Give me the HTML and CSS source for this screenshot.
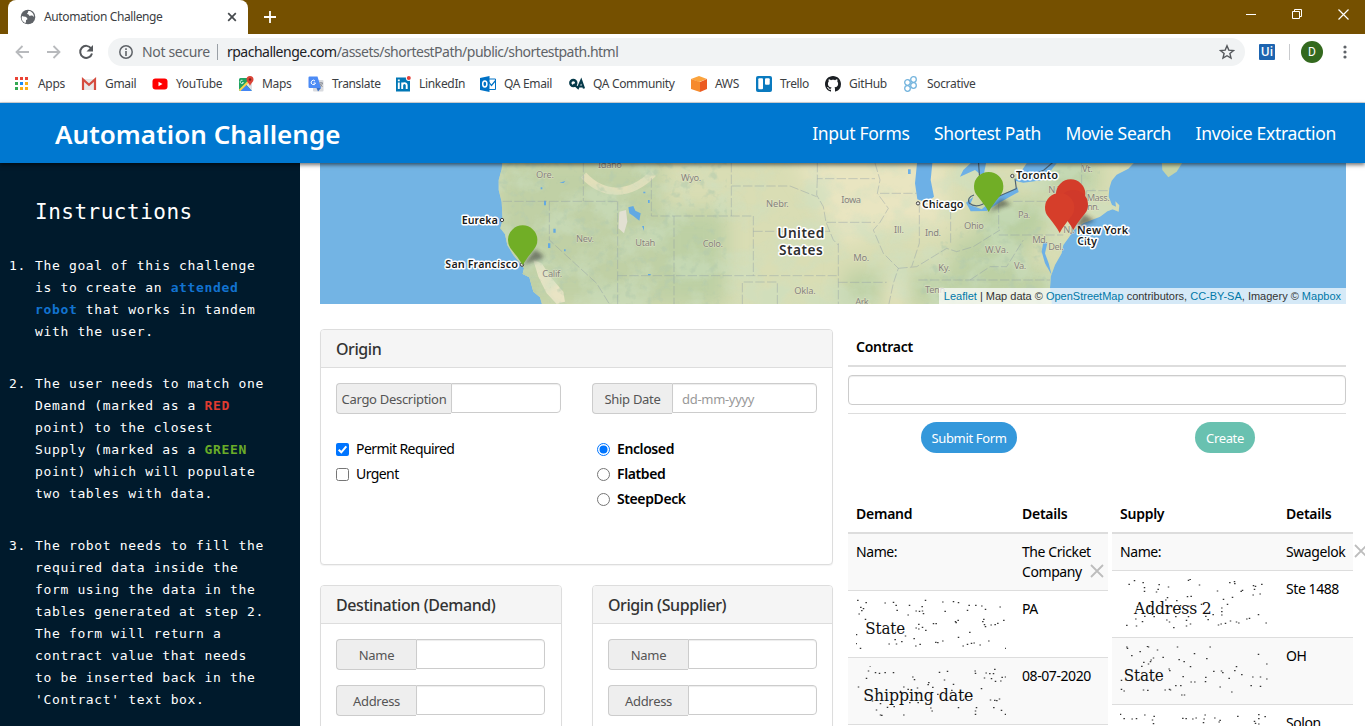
FILE: index.html
```html
<!DOCTYPE html>
<html lang="en">
<head>
<meta charset="utf-8">
<title>Automation Challenge</title>
<link rel="stylesheet" href="styles.css">
</head>
<body>
<div class="tabstrip">
  <div class="tab">
    <svg width="16" height="16" viewBox="0 0 16 16"><circle cx="8" cy="8" r="7.3" fill="#5f6368"/><path d="M2 7c2 1 4 0 5 2 1 1 0 2-1 2 0 2 0 3-1 3C2 12 1 10 2 7zM8 2c1 1-1 2-1 3 2 0 2 2 3 2 2-1 3 0 4 1 0-3-2-5-4-6z" fill="#fff"/></svg>
    <span class="tab-title">Automation Challenge</span>
    <svg width="10" height="10" viewBox="0 0 10 10"><path d="M1.2 1.2l7.6 7.6M8.8 1.2L1.200 8.800" stroke="#45494d" stroke-width="1.7"/></svg>
  </div>
  <svg class="newtab" width="12" height="12" viewBox="0 0 12 12"><path d="M6 0v12M0 6h12" stroke="#fff" stroke-width="1.8"/></svg>
  <div class="winctl">
    <svg width="10" height="10" viewBox="0 0 10 10"><path d="M0 5.500h10" stroke="#fff"/></svg>
    <svg width="10" height="10" viewBox="0 0 10 10"><path d="M.5 2.500h7v7h-7zM2.500 2.500v-2h7v7h-2" fill="none" stroke="#fff"/></svg>
    <svg width="11" height="11" viewBox="0 0 11 11"><path d="M.5.5l10 10M10.500.5l-10 10" stroke="#fff" stroke-width="1.200"/></svg>
  </div>
</div>
<div class="toolbar">
  <svg class="back" width="14" height="14" viewBox="0 0 14 14"><path d="M14 7H1.500M7.500 1L1.500 7l6 6" fill="none" stroke="#b8babd" stroke-width="1.800"/></svg>
  <svg class="fwd" width="14" height="14" viewBox="0 0 14 14"><path d="M0 7h12.500M6.500 1l6 6-6 6" fill="none" stroke="#b8babd" stroke-width="1.800"/></svg>
  <svg class="reload" width="16" height="16" viewBox="0 0 16 16"><path d="M13.200 4.500A6 6 0 1 0 14 9.500" fill="none" stroke="#55585c" stroke-width="2"/><path d="M15 1v6.500H8.500z" fill="#55585c"/></svg>
  <div class="omnibox">
    <svg width="14" height="14" viewBox="0 0 14 14"><circle cx="7" cy="7" r="6.200" fill="none" stroke="#5f6368" stroke-width="1.500"/><path d="M7 3.200v1.700M7 6v5" stroke="#5f6368" stroke-width="1.600"/></svg>
    <span class="insecure">Not secure</span>
    <span class="url"><b>rpachallenge.com</b>/assets/shortestPath/public/shortestpath.html</span>
    <svg class="star" width="16" height="16" viewBox="0 0 16 16"><path d="M8 1.800l1.800 4.300 4.700.4-3.600 3 1.100 4.600L8 11.700l-4 2.400 1.100-4.600-3.600-3 4.700-.4z" fill="none" stroke="#55585c" stroke-width="1.400"/></svg>
  </div>
  <span class="uipath">Ui</span>
  <span class="divider"></span>
  <span class="avatar">D</span>
  <svg class="dots" width="4" height="14" viewBox="0 0 4 14" fill="#5f6368"><circle cx="2" cy="2" r="1.600"/><circle cx="2" cy="7" r="1.600"/><circle cx="2" cy="12" r="1.600"/></svg>
</div>
<nav class="bookmarks">
  <a class="bm apps"><svg width="16" height="16" viewBox="0 0 16 16"><path d="M2 1h3v3H2zM7 1h3v3H7zM12 1h3v3h-3z" fill="#ea4335"/><path d="M2 6h3v3H2zM2 11h3v3H2z" fill="#34a853"/><path d="M7 6h3v3H7z" fill="#1a8cf8"/><path d="M12 6h3v3h-3zM12 11h3v3h-3zM7 11h3v3H7z" fill="#fbae17"/></svg><span>Apps</span></a>
  <a class="bm gmail"><svg width="16" height="16" viewBox="0 0 16 16"><path d="M2 3h12v11H2z" fill="#e9e9e9"/><path d="M2 14V3.500l6 5.300 6-5.300V14" fill="none" stroke="#d54c3f" stroke-width="2.200"/></svg><span>Gmail</span></a>
  <a class="bm youtube"><svg width="16" height="16" viewBox="0 0 16 16"><rect x=".5" y="2.500" width="15" height="11" rx="3" fill="#f00"/><path d="M6.500 5.700v4.600l4-2.300z" fill="#fff"/></svg><span>YouTube</span></a>
  <a class="bm maps"><svg width="16" height="16" viewBox="0 0 16 16"><rect x="1" y="2" width="13" height="13" rx="1.500" fill="#1ea362"/><path d="M14 4v11L7.500 8z" fill="#dfe1e4"/><path d="M2 15l6-6 6 6z" fill="#4285f4"/><path d="M1.500 14.500L13 3" stroke="#fbd34b" stroke-width="2"/><path d="M4.500 4.300a1.700 1.700 0 1 0 1 2.300H4" fill="none" stroke="#fff" stroke-width=".8"/><path d="M12 0a3.500 3.500 0 0 1 3.500 3.500C15.500 6 13 7 12 10c-1-3-3.500-4-3.500-6.500A3.500 3.500 0 0 1 12 0z" fill="#db4437"/><circle cx="12" cy="3.500" r="1.200" fill="#7b231e"/></svg><span>Maps</span></a>
  <a class="bm translate"><svg width="16" height="16" viewBox="0 0 16 16"><rect x="5" y="4" width="10.500" height="11.500" rx="1" fill="#d8dade"/><path d="M1.500.5h8l3.500 11.500H1.500a1 1 0 0 1-1-1v-9.500a1 1 0 0 1 1-1z" fill="#4c8bf5"/><path d="M8.500 12H13l-3 3.500z" fill="#3b6fc4"/><path d="M7 5a2.200 2.200 0 1 0 .5 2H5.500" fill="none" stroke="#fff"/><path d="M11 7h4M13 6v1M14.500 7c-.5 2-1.500 3-2.500 3.800M12 8l2.500 3" stroke="#7d828a" stroke-width=".8" fill="none"/></svg><span>Translate</span></a>
  <a class="bm linkedin"><svg width="16" height="16" viewBox="0 0 16 16"><rect x="1" y="1.500" width="14" height="14" fill="#0077b5"/><path d="M3.800 6.500V13M7.200 6.500V13M7.200 9.500c0-3 4.500-3.300 4.500 0V13M3.800 3.500v1.700" fill="none" stroke="#fff" stroke-width="1.900"/><circle cx="13.800" cy="2" r="2.900" fill="#fff"/><circle cx="13.800" cy="2" r="2" fill="#e3413a"/></svg><span>LinkedIn</span></a>
  <a class="bm email"><svg width="16" height="16" viewBox="0 0 16 16"><path d="M8 3h7.500v10.500H8z" fill="#fff" stroke="#0072c6"/><path d="M8 5l3.500 4.500L16 4" fill="none" stroke="#0072c6" stroke-width="1.200"/><path d="M0 2L9.500 0v16L0 14z" fill="#0072c6"/><ellipse cx="4.800" cy="8" rx="2.100" ry="2.900" fill="none" stroke="#fff" stroke-width="1.500"/></svg><span>QA Email</span></a>
  <a class="bm community"><svg width="16" height="16" viewBox="0 0 16 16"><circle cx="4.300" cy="7" r="3" fill="none" stroke="#063a4a" stroke-width="2.400"/><path d="M4.500 8l4.500 4 3.200-7.500 2.800 8M10.500 10.500h4" fill="none" stroke="#063a4a" stroke-width="2.200"/></svg><span>QA Community</span></a>
  <a class="bm aws"><svg width="16" height="16" viewBox="0 0 16 16"><path d="M8 0l8 3-8 3-8-3z" fill="#fba33c"/><path d="M0 3l9 3v10L0 13z" fill="#f68a2d"/><path d="M16 3L9 6v10l7-3z" fill="#ec5b22"/></svg><span>AWS</span></a>
  <a class="bm trello"><svg width="16" height="16" viewBox="0 0 16 16"><rect width="16" height="16" rx="2" fill="#0a7abf"/><rect x="2.300" y="2.300" width="4.700" height="11" rx="1" fill="#fff"/><rect x="9" y="2.300" width="4.700" height="6.500" rx="1" fill="#fff"/></svg><span>Trello</span></a>
  <a class="bm github"><svg width="16" height="16" viewBox="0 0 16 16"><path fill="#1b1f23" d="M8 0C3.580 0 0 3.580 0 8c0 3.540 2.290 6.530 5.470 7.590.4.070.55-.17.55-.38 0-.19-.01-.82-.01-1.490-2.010.37-2.530-.49-2.690-.94-.09-.23-.48-.94-.82-1.130-.28-.15-.68-.52-.01-.53.63-.01 1.080.58 1.230.82.72 1.210 1.870.87 2.330.66.07-.52.28-.87.51-1.070-1.780-.2-3.640-.89-3.640-3.950 0-.87.31-1.590.82-2.150-.08-.2-.36-1.020.08-2.120 0 0 .67-.21 2.200.82.64-.18 1.320-.27 2-.27s1.360.09 2 .27c1.530-1.040 2.200-.82 2.200-.82.44 1.100.16 1.920.08 2.120.51.56.82 1.270.82 2.150 0 3.070-1.870 3.750-3.650 3.950.29.25.54.73.54 1.480 0 1.070-.01 1.930-.01 2.200 0 .21.15.46.55.38A8.010 8.010 0 0 0 16 8c0-4.420-3.580-8-8-8z"/></svg><span>GitHub</span></a>
  <a class="bm socrative"><svg width="16" height="16" viewBox="0 0 16 16" fill="none" stroke="#74b4dd" stroke-width="1.300"><circle cx="4.500" cy="6.500" r="2.800"/><circle cx="4.500" cy="12.500" r="2.800"/><circle cx="10.500" cy="3.500" r="2.800"/><circle cx="10.500" cy="9.500" r="2.800"/></svg><span>Socrative</span></a>
</nav>

<header class="site-head">
  <h1>Automation Challenge</h1>
  <nav class="menu"><a>Input Forms</a><a>Shortest Path</a><a>Movie Search</a><a>Invoice Extraction</a></nav>
</header>

<div class="page">
  <aside class="side">
    <h2>Instructions</h2>
    <ol>
      <li><span class="num">1.</span><p>The goal of this challenge<br>is to create an <b class="blue">attended<br>robot</b> that works in tandem<br>with the user.</p></li>
      <li><span class="num">2.</span><p>The user needs to match one<br>Demand (marked as a <b class="red">RED</b><br>point) to the closest<br>Supply (marked as a <b class="green">GREEN</b><br>point) which will populate<br>two tables with data.</p></li>
      <li><span class="num">3.</span><p>The robot needs to fill the<br>required data inside the<br>form using the data in the<br>tables generated at step 2.<br>The form will return a<br>contract value that needs<br>to be inserted back in the<br>'Contract' text box.</p></li>
    </ol>
  </aside>

  <main class="main">
    <div class="map">
      <svg class="map-art" width="1026" height="141" viewBox="0 9 3078 423">
        <defs>
          <filter id="terrain" x="0" y="0" width="100%" height="100%">
            <feTurbulence type="fractalNoise" baseFrequency=".009 .011" numOctaves="5" seed="8"/>
            <feColorMatrix values="0 0 0 0 .6  0 0 0 0 .74  0 0 0 0 .54  3.600 0 0 0 -1.500"/>
            <feComposite in2="SourceGraphic" operator="in"/>
          </filter>
          <filter id="relief" x="0" y="0" width="100%" height="100%">
            <feTurbulence type="fractalNoise" baseFrequency=".035" numOctaves="3" seed="3"/>
            <feColorMatrix values="0 0 0 0 .46  0 0 0 0 .6  0 0 0 0 .42  0 5 0 0 -2.800"/>
            <feComposite in2="SourceGraphic" operator="in"/>
          </filter>
          <filter id="soft" x="-20%" y="-20%" width="140%" height="140%"><feGaussianBlur stdDeviation="28"/></filter>
          <filter id="shade" x="-50%" y="-50%" width="200%" height="200%"><feGaussianBlur stdDeviation="7"/></filter>
          <clipPath id="landclip"><path id="land" d="M548 0L545 28 536 60 536 90 545 125 548 180 541 205 555 222 562 255 580 285 603 312 612 325 608 342 628 352 640 395 660 412 668 440H2196L2190 384 2192 350 2205 315 2225 280 2230 255 2245 235 2262 210 2290 190 2340 170 2362 154 2378 148 2396 155 2398 136 2386 124 2388 140 2376 135 2366 110 2368 85 2375 62 2390 44 2425 26 2450 0z"/></clipPath>
          <path id="pin" d="M0 0C-8-16-20-30-33-47A44 44 0 1 1 33-47C20-30 8-16 0 0z"/>
        </defs>
        <rect y="0" width="3078" height="440" fill="#73b4e4"/>
        <use href="#land" fill="#d9ddb4"/>
        <g clip-path="url(#landclip)">
          <g filter="url(#soft)">
            <path d="M530 0H1030V440H530z" fill="#c0d0a5"/>
            <path d="M1030 150H1220V440H1030zM1580 330H2200V440H1560zM1900 230H2120V440H1880z" fill="#bdd0a4"/>
            <path d="M1980 120H2180V240H1980zM2170 0H2330V100H2170z" fill="#b9cfa2"/>
            <path d="M1420 0H1880V200H1700L1560 260 1500 120zM1700 340H1760V440H1690z" fill="#e9e5c1"/>
          </g>
          <path d="M640 300L665 310 695 355 730 395 735 425 710 432 680 400 655 350z" fill="#e9e4c4"/>
          <path d="M790 45C850 110 930 110 1000 40" fill="none" stroke="#e2dfba" stroke-width="22"/>
          <rect x="530" y="0" width="1920" height="440" fill="#000" filter="url(#terrain)" opacity=".5"/>
          <path d="M530 0H1220V440H530zM1880 200H2180V440H1780zM2200 0H2340V100H2200z" filter="url(#relief)" opacity=".55"/>
          <path d="M898 155L918 150 922 185 912 220 895 205z" fill="#e2e0d2"/>
          <path d="M925 142L940 138 946 152 962 160 958 182 940 168 928 160zM966 198h6v14zM672 122h6v14h-6zM700 206h7v12h-7zM684 250h7v14h-7zM718 68l18-5-5 6zM732 268h5v6h-5zM984 120h5v9h-5zM662 82h5v6h-5zM620 102l8 8zM984 342h8v4h-8zM970 95h6v5h-6z" fill="#62a9e3"/>
          <path d="M1792 0H1838L1832 60 1842 110 1820 128 1792 118 1785 70zM1938 128L1960 110 1950 135 1985 148 2020 118 2092 82 2096 96 2035 130 2000 153 1952 154zM1962 0H2000L1990 50 1965 30 1920 50 1930 30zM2120 10H2210L2170 60 2110 68 2085 62zM1764 28h8v14h-8z" fill="#6db0e6"/>
          <path d="M2170 245L2182 250 2175 280 2186 310 2195 345 2175 310 2165 275z" fill="#6db0e6"/>
          <g fill="none" stroke="#8d9aa5" stroke-opacity=".5" stroke-width="2.500" stroke-dasharray="28 7">
            <path d="M548 124H893M688 124V240L830 370 868 432M790 9V124M893 124V440M893 347H1550M994 55V168H1300M1062 168V440M1234 9V168M1234 78H1410L1490 110M1300 168V347M1300 214H1530M1267 432V366H1372V440M1492 9V56H1665M1520 187H1665M1555 250V440M1680 100H1790M1555 367H1700M1798 130V250L1775 320M1892 150V250M1795 360H2190M2036 130V205M2036 225H2230M2080 124H2180L2210 180M2285 9V120M2265 92H2370M2300 92V160"/>
            <path d="M1492 56L1490 105 1510 140 1518 187 1540 240 1555 255M1665 9L1680 60 1672 100 1705 145 1680 187 1660 210 1690 280 1735 325 1720 370 1705 440M1735 325L1790 320 1880 265 1910 275 1960 260 2040 210M1950 360L2010 320 2060 320 2110 240"/>
          </g>
          <path d="M1975 0L1979 55M1962 105Q1940 112 1948 130Q1972 148 2005 122L2089 86 2085 56M2145 42L2172 30 2200 6" fill="none" stroke="#4e6373" stroke-width="3.500"/>
        </g>
        <path d="M2525 0H2592L2570 35 2545 52 2527 30z" fill="#c5d4a9"/>
        <path d="M2262 196L2285 183 2320 178 2285 190z" fill="#d8dcb4"/>
        <g class="state">
          <text x="648" y="53" textLength="54">Ore.</text><text x="834" y="24" textLength="72">Idaho</text><text x="768" y="246" textLength="54">Nev.</text><text x="946" y="257" textLength="60">Utah</text><text x="667" y="352" textLength="60">Calif.</text><text x="1083" y="62" textLength="61">Wyo.</text><text x="1338" y="140" textLength="68">Nebr.</text><text x="1564" y="129" textLength="59">Iowa</text><text x="1148" y="260" textLength="61">Colo.</text><text x="1722" y="218" textLength="30">Ill.</text><text x="1815" y="228" textLength="48">Ind.</text><text x="1932" y="206" textLength="60">Ohio</text><text x="1995" y="279" textLength="71">W.Va.</text><text x="1600" y="303" textLength="48">Mo.</text><text x="1855" y="333" textLength="36">Ky.</text><text x="1423" y="401" textLength="64">Okla.</text><text x="1815" y="398" textLength="67">Tenn.</text><text x="1606" y="434" textLength="46">Ark.</text><text x="2094" y="175" textLength="37">Pa.</text><text x="2137" y="248" textLength="46">Md.</text><text x="2185" y="269" textLength="46">Del.</text><text x="2082" y="326" textLength="37">Va.</text><text x="2286" y="37" textLength="32">Vt.</text><text x="2300" y="122" textLength="69">Mass.</text><text x="2272" y="151" textLength="66">Conn.</text><text x="2185" y="99" textLength="48">N.Y.</text><text x="2230" y="218" textLength="34">N.J.</text>
        </g>
        <g class="city">
          <text x="425" y="192" textLength="109">Eureka</text><text x="376" y="325" textLength="218">San Francisco</text><text x="1806" y="144" textLength="125">Chicago</text><text x="2088" y="56" textLength="126">Toronto</text><text x="2271" y="222" textLength="154">New York</text><text x="2272" y="256" textLength="59">City</text>
        </g>
        <g class="country"><text x="1372" y="235" textLength="141">United</text><text x="1377" y="284" textLength="131">States</text></g>
        <g fill="#eee" stroke="#444" stroke-width="3"><circle cx="546" cy="180" r="5"/><circle cx="606" cy="314" r="5"/><circle cx="1794" cy="130" r="5"/><circle cx="2077" cy="48" r="5"/></g>
        <g fill="#222" opacity=".5" filter="url(#shade)"><path d="M608 316L645 268 675 292zM2006 155L2043 116 2073 133zM2262 207L2290 161 2325 182z"/></g>
        <use href="#pin" x="608" y="316" fill="#71ae26"/><use href="#pin" x="2006" y="156" fill="#71ae26"/>
        <use href="#pin" x="2252" y="178" fill="#d43d2a"/><use href="#pin" x="2260" y="210" fill="#d0392a"/><use href="#pin" x="2219" y="219" fill="#d63e2a"/>
      </svg>
      <div class="credit"><a>Leaflet</a> | Map data © <a>OpenStreetMap</a> contributors, <a>CC-BY-SA</a>, Imagery © <a>Mapbox</a></div>
    </div>

    <div class="work">
      <div class="forms">
        <section class="panel origin">
          <h3>Origin</h3>
          <div class="origin-body">
            <div class="ocol left">
              <div class="group"><span class="addon cargo">Cargo Description</span><span class="field"></span></div>
              <div class="checks">
                <label><svg width="13" height="13" viewBox="0 0 13 13"><rect width="13" height="13" rx="2" fill="#0075ff"/><path d="M2.700 6.700l2.600 2.600 5-6" fill="none" stroke="#fff" stroke-width="2"/></svg><span>Permit Required</span></label>
                <label><svg width="13" height="13" viewBox="0 0 13 13"><rect x=".5" y=".5" width="12" height="12" rx="2" fill="#fff" stroke="#767676"/></svg><span>Urgent</span></label>
              </div>
            </div>
            <div class="ocol right">
              <div class="group"><span class="addon">Ship Date</span><span class="field">dd-mm-yyyy</span></div>
              <div class="checks radios">
                <label><svg width="13" height="13" viewBox="0 0 13 13"><circle cx="6.500" cy="6.500" r="6" fill="#fff" stroke="#0075ff"/><circle cx="6.500" cy="6.500" r="4" fill="#0075ff"/></svg><span>Enclosed</span></label>
                <label><svg width="13" height="13" viewBox="0 0 13 13"><circle cx="6.500" cy="6.500" r="6" fill="#fff" stroke="#767676"/></svg><span>Flatbed</span></label>
                <label><svg width="13" height="13" viewBox="0 0 13 13"><circle cx="6.500" cy="6.500" r="6" fill="#fff" stroke="#767676"/></svg><span>SteepDeck</span></label>
              </div>
            </div>
          </div>
        </section>
        <div class="pair">
          <section class="panel small"><h3>Destination (Demand)</h3><div class="stack"><div class="group"><span class="addon">Name</span><span class="field"></span></div><div class="group"><span class="addon">Address</span><span class="field"></span></div></div></section>
          <section class="panel small supplier"><h3>Origin (Supplier)</h3><div class="stack"><div class="group"><span class="addon">Name</span><span class="field"></span></div><div class="group"><span class="addon">Address</span><span class="field"></span></div></div></section>
        </div>
      </div>

      <div class="results">
        <div class="contract-title">Contract</div>
        <div class="contract-field"></div>
        <div class="actions"><button class="submit">Submit Form</button><button class="create">Create</button></div>
        <div class="tables">
          <div class="table demand">
            <div class="row th"><span>Demand</span><span>Details</span></div>
            <div class="row odd"><span>Name:</span><span class="cricket">The Cricket<br>Company <svg class="close" width="14" height="14" viewBox="0 0 14 14"><path d="M1 1l12 12M13 1L1 13" stroke="#bdbdbd" stroke-width="1.800"/></svg></span></div>
            <div class="row"><svg class="scan" viewBox="48 327 450 150"><path class="specks" d="M53 331h1M78 338h1M62 352h1M70 356h1M65 362h1M57 372h1M76 388h1M49 434h1M48 461h1M61 475h1M135 339h1M160 337h1M168 346h1M171 361h1M208 346h1M256 331h1M246 350h1M228 363h1M238 364h1M247 363h1M204 375h1M250 371h1M308 336h1M340 335h1M355 338h1M315 364h1M387 346h1M382 361h1M407 346h1M425 348h1M436 358h1M480 351h1M491 391h1M346 395h1M354 391h1M348 398h1M280 401h1M288 401h1M236 403h1M247 412h1M228 414h1M236 417h1M257 421h1M431 388h1M428 395h1M433 404h1M436 410h1M453 405h1M465 404h1M473 400h1M389 427h1M196 438h1M165 449h1M147 462h1M169 462h1M185 455h1M222 446h1M227 468h1M240 463h1M287 457h1M293 458h1M308 453h1M355 442h1M369 468h1M382 463h1M394 460h1M402 459h1M420 465h1M446 453h1M497 475h1"/><text x="76" y="431" textLength="119" lengthAdjust="spacingAndGlyphs">State</text></svg><span>PA</span></div>
            <div class="row odd"><svg class="scan" viewBox="48 528 450 150"><path class="specks" d="M90 528h1M85 543h1M106 548h1M118 550h1M135 548h1M160 548h1M79 565h1M55 591h1M218 561h1M223 569h1M298 547h1M322 544h1M405 543h1M406 550h1M464 538h1M438 549h1M449 551h1M460 551h1M486 562h1M496 561h1M313 570h1M266 578h1M264 584h1M340 583h1M433 564h1M454 566h1M466 574h1M482 573h1M424 596h1M191 591h1M232 594h1M278 592h1M204 598h1M293 613h1M335 601h1M181 604h1M451 630h1M464 631h1M470 632h1M478 627h1M97 633h1M121 641h1M209 638h1M234 638h1M109 660h1M142 652h1M162 650h1M121 675h1M125 676h1M191 675h1M272 654h1M276 663h1M355 653h1M409 653h1M406 663h1M406 673h1M461 653h1M484 661h1M496 673h1"/><text x="70" y="633" textLength="330" lengthAdjust="spacingAndGlyphs">Shipping date</text></svg><span>08-07-2020</span></div>
            <div class="row"><span></span><span></span></div>
          </div>
          <div class="table supply">
            <div class="row th"><span>Supply</span><span>Details</span></div>
            <div class="row odd"><span>Name:</span><span class="swagelok">Swagelok <svg class="close" width="14" height="14" viewBox="0 0 14 14"><path d="M1 1l12 12M13 1L1 13" stroke="#bdbdbd" stroke-width="1.800"/></svg></span></div>
            <div class="row"><svg class="scan" viewBox="45 267 450 150"><path class="specks" d="M88 272h1M72 283h1M114 278h1M118 293h1M118 304h1M162 284h1M159 298h1M154 306h1M190 291h1M255 268h1M250 271h1M283 285h1M337 303h1M374 278h1M388 275h1M389 281h1M408 304h1M412 301h1M445 287h1M451 289h1M470 283h1M448 298h1M444 315h1M465 312h1M187 323h1M182 330h1M215 332h1M247 320h1M258 319h1M382 322h1M355 328h1M367 343h1M350 354h1M350 365h1M350 375h1M289 343h1M226 347h1M97 350h1M133 350h1M251 349h1M92 387h1M119 379h1M142 373h1M147 380h1M185 390h1M212 380h1M193 396h1M206 413h1M250 380h1M244 391h1M256 402h1M244 408h1M302 379h1M324 374h1M309 389h1M65 406h1M94 408h1M112 395h1M340 405h1M348 402h1M361 400h1M376 393h1M394 396h1M401 399h1M425 387h1M433 385h1M460 374h1M483 399h1"/><text x="87" y="372" textLength="233" lengthAdjust="spacingAndGlyphs">Address 2</text></svg><span>Ste 1488</span></div>
            <div class="row odd"><svg class="scan" viewBox="45 468 450 150"><path class="specks" d="M65 471h1M67 475h1M80 497h1M127 469h1M130 471h1M105 485h1M157 480h1M217 471h1M315 471h1M268 491h1M174 502h1M145 504h1M138 510h1M136 515h1M116 517h1M130 522h1M110 529h1M222 509h1M194 542h1M192 537h1M237 515h1M305 506h1M256 530h1M326 544h1M349 543h1M353 548h1M394 530h1M389 542h1M460 493h1M485 522h1M372 565h1M410 554h1M443 561h1M466 561h1M485 567h1M234 560h1M302 562h1M258 576h1M269 576h1M301 575h1M212 587h1M227 587h1M193 598h1M180 600h1M196 600h1M345 591h1M380 606h1M438 587h1M466 589h1M115 600h1M128 601h1M49 598h1M57 603h1M230 615h1M238 615h1M49 571h1M145 573h1"/><text x="56" y="573" textLength="120" lengthAdjust="spacingAndGlyphs">State</text></svg><span>OH</span></div>
            <div class="row"><svg class="scan" viewBox="45 669 450 150"><path class="specks" d="M46 673h1M57 686h1M81 687h1M94 686h1M119 675h1M147 679h1M142 690h1M145 701h1M233 685h1M243 686h1M263 687h1M273 684h1M300 675h1M297 687h1M295 698h1M329 684h1M345 691h1M342 696h1M398 679h1M461 674h1M480 680h1M461 686h1M448 694h1M451 700h1M461 702h1"/></svg><span>Solon</span></div>
          </div>
        </div>
      </div>
    </div>
  </main>
</div>
</body>
</html>
```

FILE: styles.css
```css
* { box-sizing: border-box; }
body { margin: 0; width: 1365px; height: 726px; overflow: hidden; background: #fff; color: #000; font: 14px/20px "Noto Sans", "Open Sans", sans-serif; display: flex; flex-direction: column; }
svg { display: block; flex: none; }
span, a { white-space: nowrap; }

.tabstrip { height: 34px; background: #755000; display: flex; align-items: flex-start; padding-left: 8px; flex: none; }
.tab { width: 240px; height: 34px; background: #fff; border-radius: 8px 8px 0 0; display: flex; align-items: center; padding: 0 12px; gap: 8px; }
.tab svg:last-child { margin-right: -1px; }
.tab-title { flex: 1; font-size: 12px; letter-spacing: -.38px; color: #3c4043; }
.newtab { margin: 11px 0 0 16px; }
.winctl { margin-left: auto; display: flex; gap: 36px; padding: 9px 16px 0 0; }

.toolbar { height: 36px; display: flex; align-items: center; padding-left: 15px; flex: none; color: #5f6368; }
.fwd { margin-left: 18px; }
.reload { margin-left: 17px; }
.omnibox { margin-left: 14px; width: 1137px; height: 28px; border-radius: 14px; background: #f1f3f4; display: flex; align-items: center; padding: 0 10px 0 11px; flex: none; }
.insecure { margin-left: 9px; border-right: 1px solid #9aa0a6; line-height: 16px; font-size: 14px; letter-spacing: -.35px; width: 76px; }
.url { margin-left: 9px; letter-spacing: -.51px; }
.url b { font-weight: 400; color: #202124; }
.star { margin-left: auto; }
.uipath { margin-left: 14px; width: 16px; height: 16px; background: #1d64b0; border-radius: 1px; color: #fff; font: 600 12px/16px "Open Sans", sans-serif; text-align: center; }
.divider { width: 1px; height: 16px; background: #c9cbce; margin-left: 14px; }
.avatar { margin-left: 11px; width: 22px; height: 22px; border-radius: 50%; background: #33691e; color: #fff; font: 12px/22px Roboto, sans-serif; text-align: center; }
.dots { margin-left: 20px; }

.bookmarks { height: 33px; border-bottom: 1px solid #d5d7da; display: flex; flex: none; padding: 6px 0 0 13px; font-size: 12px; letter-spacing: -.33px; line-height: 16px; color: #3c4043; }
.bm { display: flex; gap: 8px; flex: none; }
.bm.apps { gap: 9px; }
.apps { width: 68px; } .gmail { width: 71px; } .youtube { width: 86px; } .maps { width: 70px; }
.translate { width: 87px; } .linkedin { width: 85px; } .email { width: 89px; } .community { width: 122px; }
.aws { width: 65px; } .trello { width: 69px; } .github { width: 78px; }

.site-head { height: 60px; background: #0078d0; color: #fff; display: flex; align-items: center; justify-content: space-between; flex: none; padding: 0 29px 0 55px; position: relative; z-index: 2; box-shadow: 0 2px 4px rgba(0,0,0,.55); }
h1 { margin: 0; font: 600 26px/36px "Noto Sans", sans-serif; letter-spacing: .05px; padding-top: 1px; white-space: nowrap; }
.menu { display: flex; font-size: 17.5px; line-height: 24px; gap: 24.5px; letter-spacing: -.32px; }

.page { display: flex; height: 563px; flex: none; }
.side { width: 300px; background: #001a2c; color: #fff; font: 13px/22px "DejaVu Sans Mono", monospace; letter-spacing: .65px; flex: none; padding-left: 9px; overflow: hidden; }
h2 { margin: 0; padding: 34px 0 0 26px; font: 21px/30px "DejaVu Sans Mono", monospace; letter-spacing: .5px; }
ol { list-style: none; margin: 28px 0 0; padding: 0; display: flex; flex-direction: column; gap: 30px; }
li { display: flex; }
li p { margin: 0; white-space: nowrap; }
.num { width: 26px; }
.blue { color: #1273d0; } .red { color: #e03b30; } .green { color: #6aac28; }

.main { width: 1065px; padding-left: 20px; overflow: hidden; }
.map { width: 1026px; height: 141px; position: relative; overflow: hidden; }
.state text { font: 28px "Noto Sans", sans-serif; fill: #86837c; stroke: #e8e8cf; stroke-width: 3px; stroke-opacity: .7; paint-order: stroke; }
.city text { font: 600 33px "Noto Sans", sans-serif; fill: #1a1a1a; stroke: #fff; stroke-width: 9px; stroke-linejoin: round; paint-order: stroke; }
.country text { font: 600 41px "Noto Sans", sans-serif; fill: #303030; stroke: #fff; stroke-width: 9px; stroke-linejoin: round; paint-order: stroke; }
.credit { position: absolute; right: 0; bottom: 0; height: 16px; padding: 0 5px; background: rgba(255,255,255,.7); color: #333; font: 11px/16px "Liberation Sans", Arial, sans-serif; white-space: nowrap; }
.credit a { color: #0078a8; }

.work { display: flex; gap: 15px; padding-top: 25px; }
.forms { width: 513px; flex: none; }
.panel { border: 1px solid #ddd; border-radius: 4px; background: #fff; box-shadow: 0 1px 1px rgba(0,0,0,.05); overflow: hidden; }
h3 { margin: 0; height: 38px; padding: 0 15px; background: #f5f5f5; border-bottom: 1px solid #ddd; font: 500 16px/38px "Noto Sans", sans-serif; letter-spacing: -.42px; color: #333; white-space: nowrap; }
.origin { height: 236px; }
.origin-body { display: flex; padding: 15px; gap: 31px; }
.ocol { width: 225px; }
.group { display: flex; height: 31px; color: #555; font-size: 13px; letter-spacing: -.3px; }
.addon { width: 80px; height: 31px; background: #eee; border: 1px solid #ccc; border-right: 0; border-radius: 4px 0 0 4px; text-align: center; line-height: 31px; flex: none; }
.addon.cargo { width: 115px; }
.field { flex: 1; height: 30px; border: 1px solid #ccc; border-radius: 0 4px 4px 0; box-shadow: inset 0 1px 1px rgba(0,0,0,.075); padding-left: 9px; line-height: 31px; color: #999; }
.checks { padding-top: 25px; display: flex; flex-direction: column; gap: 5px; }
.checks label { display: flex; height: 20px; align-items: center; gap: 7px; letter-spacing: -.58px; }
.checks.radios label { letter-spacing: -.4px; }
.radios { padding-left: 5px; font-weight: 600; }
.pair { display: flex; justify-content: space-between; margin-top: 20px; }
.small { width: 242px; height: 300px; }
.supplier { width: 241px; }
.stack { padding: 15px 16px 0 15px; display: flex; flex-direction: column; gap: 15px; }
.supplier .stack { padding-right: 15px; }

.results { width: 498px; flex: none; }
.contract-title { height: 38px; padding: 8px; font-weight: 600; letter-spacing: -.25px; border-bottom: 2px solid #ddd; }
.contract-field { height: 30px; margin-top: 8px; border: 1px solid #ccc; border-radius: 4px; box-shadow: inset 0 1px 1px rgba(0,0,0,.075); }
.actions { border-top: 1px solid #ddd; margin-top: 8px; padding-top: 8px; display: flex; height: 83px; align-items: flex-start; }
button { height: 31px; border: 0; border-radius: 16px; color: #fff; font: 13px/33px "Noto Sans", sans-serif; letter-spacing: -.35px; padding: 0; }
.submit { width: 96px; background: #3498db; margin-left: 73px; }
.create { width: 60px; background: #69c1b0; margin-left: 178px; }
.tables { display: flex; gap: 4px; width: 520px; }
.demand { width: 260px; } .supply { width: 241px; }
.row { display: flex; border-top: 1px solid #ddd; padding: 8px; min-height: 36px; letter-spacing: -.42px; }
.row > :first-child { width: 150px; margin-right: 16px; flex: none; }
.th { border-top: 0; border-bottom: 2px solid #ddd; font-weight: 600; height: 38px; letter-spacing: -.25px; }
.th + .row { border-top: 0; }
.odd { background: #f9f9f9; }
.close { position: absolute; }
.cricket, .swagelok { position: relative; }
.cricket .close { left: 68px; top: 22px; }
.swagelok .close { left: 68px; top: 2px; }
.scan { height: 50px; }
.scan text { font: 51px "DejaVu Serif", Georgia, serif; fill: #111; }
.specks { stroke: #333; stroke-width: 3.500; stroke-linecap: square; fill: none; }
```
